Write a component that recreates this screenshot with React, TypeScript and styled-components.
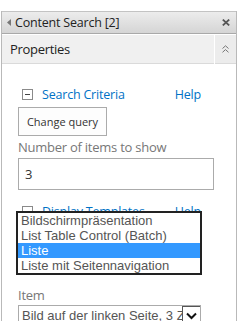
import React from "react";
import styled, { createGlobalStyle } from "styled-components";

const Global = createGlobalStyle`
  html, body { margin: 0; padding: 0; background: #fff; }
  body { font-family: "Open Sans", "Liberation Sans", sans-serif; overflow: hidden; }
`;

const Page = styled.div`
  width: 240px;
  height: 321px;
  padding-top: 11px;
  box-sizing: border-box;
  overflow: hidden;
`;

const Pane = styled.div`
  position: relative;
  margin-left: 1px;
  width: 236px;
  height: 310px;
  box-sizing: border-box;
  border-left: 1px solid #b9b9b9;
  border-right: 1px solid #b9b9b9;
`;

const Header = styled.div`
  height: 23px;
  box-sizing: border-box;
  border-top: 1px solid #c3c3c3;
  border-bottom: 1px solid #a9a9a9;
  background: linear-gradient(#ececec, #d5d5d5);
  display: flex;
  align-items: center;
  padding: 0 6px 0 5px;
  font-size: 12.5px;
  color: #222;
`;

const Title = styled.span`
  flex: 1;
  margin-left: 4px;
  letter-spacing: -0.2px;
`;

const PropsBar = styled.div`
  display: flex;
  gap: 1px;
  margin-top: 1px;
  height: 29px;
`;

const PropsLabel = styled.div`
  flex: 1;
  background: #f0f0f0;
  border-bottom: 1px solid #dadada;
  display: flex;
  align-items: center;
  padding-left: 8px;
  font-size: 13px;
  color: #222;
  letter-spacing: -0.3px;
`;

const ChevronBtn = styled.div`
  width: 21px;
  background: #ececec;
  border-bottom: 1px solid #dadada;
  display: flex;
  align-items: center;
  justify-content: center;
`;

const Body = styled.div`
  padding: 0 0 0 16px;
`;

const SectionRow = styled.div<{ $top: number }>`
  display: flex;
  align-items: center;
  margin-top: ${(p) => p.$top}px;
  height: 14px;
  width: 196px;
`;

const MinusBox = styled.div`
  width: 9px;
  height: 9px;
  margin-left: 4px;
  border: 1px solid #8a8a8a;
  position: relative;
  box-sizing: content-box;
  &::after {
    content: "";
    position: absolute;
    left: 2px;
    top: 4px;
    width: 5px;
    height: 1px;
    background: #444;
  }
`;

const SectionLink = styled.span`
  flex: 1;
  margin-left: 9px;
  color: #0072c6;
  font-size: 12.5px;
  letter-spacing: -0.2px;
`;

const HelpLink = styled.span`
  color: #0072c6;
  font-size: 12.5px;
  letter-spacing: -0.2px;
  margin-right: 13px;
`;

const Button = styled.div`
  margin-top: 6px;
  width: 89px;
  height: 29px;
  box-sizing: border-box;
  border: 1px solid #ababab;
  background: #fdfdfd;
  display: flex;
  align-items: center;
  justify-content: center;
  font-size: 11px;
  color: #333;
`;

const Label = styled.div<{ $top: number }>`
  margin-top: ${(p) => p.$top}px;
  font-size: 13px;
  color: #777;
  letter-spacing: -0.25px;
  line-height: 16px;
`;

const TextInput = styled.div`
  margin-top: 3px;
  width: 196px;
  height: 32px;
  box-sizing: border-box;
  border: 1px solid #ababab;
  display: flex;
  align-items: center;
  padding-left: 6px;
  font-size: 13px;
  color: #333;
`;

const Select = styled.div`
  margin-top: 2px;
  width: 183px;
  height: 20px;
  box-sizing: border-box;
  border: 1px solid #ababab;
  display: flex;
  align-items: center;
  font-family: "Liberation Sans", Arial, sans-serif;
  font-size: 13px;
  color: #555;
  overflow: hidden;
`;

const SelectText = styled.span`
  flex: 1;
  padding-left: 3px;
  white-space: nowrap;
  overflow: hidden;
`;

const SelectArrow = styled.div`
  width: 17px;
  height: 18px;
  border-left: 1px solid #555;
  border-top: 1px solid #555;
  display: flex;
  align-items: center;
  justify-content: center;
  align-self: flex-start;
`;

const DropList = styled.div`
  position: absolute;
  left: 14px;
  top: 200px;
  width: 186px;
  box-sizing: border-box;
  border: 2px solid #222;
  background: #fff;
  font-family: "Liberation Sans", Arial, sans-serif;
  font-size: 13px;
`;

const DropItem = styled.div<{ $sel?: boolean }>`
  height: 15px;
  line-height: 15px;
  padding-left: 3px;
  white-space: nowrap;
  color: ${(p) => (p.$sel ? "#fff" : "#555")};
  background: ${(p) => (p.$sel ? "#3399ff" : "transparent")};
`;

export default function App() {
  return (
    <Page>
      <Global />
      <Pane>
        <Header>
          <svg width="4" height="7" viewBox="0 0 4 7">
            <path d="M4 0 L0 3.5 L4 7 Z" fill="#777" />
          </svg>
          <Title>Content Search [2]</Title>
          <svg width="8" height="7" viewBox="0 0 8 7">
            <path d="M0.8 0.6 L7.2 6.4 M7.2 0.6 L0.8 6.4" stroke="#555" strokeWidth="1.8" />
          </svg>
        </Header>
        <PropsBar>
          <PropsLabel>Properties</PropsLabel>
          <ChevronBtn>
            <svg width="7" height="8" viewBox="0 0 7 8">
              <path d="M0.5 3.5 L3.5 0.8 L6.5 3.5 M0.5 7.3 L3.5 4.6 L6.5 7.3" stroke="#777" fill="none" strokeWidth="1" />
            </svg>
          </ChevronBtn>
        </PropsBar>
        <Body>
          <SectionRow $top={23}>
            <MinusBox />
            <SectionLink>Search Criteria</SectionLink>
            <HelpLink>Help</HelpLink>
          </SectionRow>
          <Button>Change query</Button>
          <Label $top={3}>Number of items to show</Label>
          <TextInput>3</TextInput>
          <SectionRow $top={14}>
            <MinusBox />
            <SectionLink>Display Templates</SectionLink>
            <HelpLink>Help</HelpLink>
          </SectionRow>
          <Label $top={69}>Item</Label>
          <Select>
            <SelectText>Bild auf der linken Seite, 3 Zeilen rechts</SelectText>
            <SelectArrow>
              <svg width="11" height="8" viewBox="0 0 11 8">
                <path d="M1 1.5 L5.5 6 L10 1.5" stroke="#111" strokeWidth="2" fill="none" />
              </svg>
            </SelectArrow>
          </Select>
        </Body>
        <DropList>
          <DropItem>Bildschirmpräsentation</DropItem>
          <DropItem>List Table Control (Batch)</DropItem>
          <DropItem $sel>Liste</DropItem>
          <DropItem>Liste mit Seitennavigation</DropItem>
        </DropList>
      </Pane>
    </Page>
  );
}
